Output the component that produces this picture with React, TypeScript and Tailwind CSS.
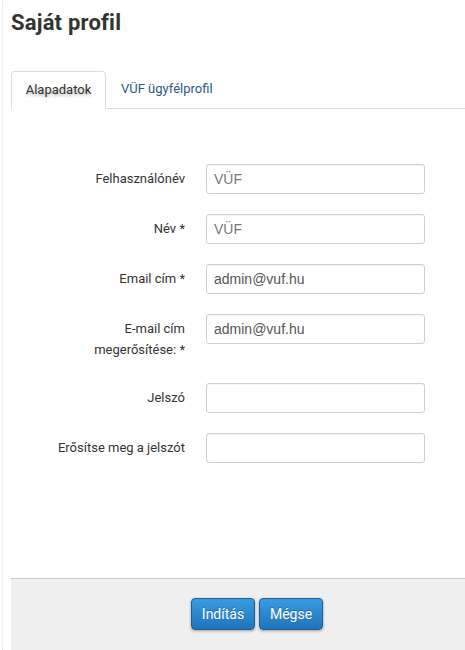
import React from "react";

const rows: { label: string[]; value: string; gray?: boolean }[] = [
  { label: ["Felhasználónév"], value: "VÜF", gray: true },
  { label: ["Név *"], value: "VÜF", gray: true },
  { label: ["Email cím *"], value: "admin@vuf.hu" },
  { label: ["E-mail cím", "megerősítése: *"], value: "admin@vuf.hu" },
  { label: ["Jelszó"], value: "" },
  { label: ["Erősítse meg a jelszót"], value: "" },
];

export default function App() {
  return (
    <div className="w-[465px] h-[650px] overflow-hidden bg-white" style={{ fontFamily: "Roboto, 'Liberation Sans', sans-serif" }}>
      <div className="ml-[2px] h-full border-l border-dotted border-[#e2e2e2] pl-[8px]">
        <h1 className="pt-[9px] text-[22px] font-bold leading-[28px] text-[#333] tracking-[0.2px]">Saját profil</h1>
        <div className="mt-[34px] flex h-[38px] items-end border-b border-[#dcdcdc]">
          <div className="mb-[-1px] flex h-[38px] w-[95px] items-center justify-center rounded-t-[4px] border border-[#dcdcdc] border-b-white bg-white text-[13px] text-[#333] [text-shadow:0_2px_3px_rgba(0,0,0,0.3)]">
            Alapadatok
          </div>
          <div className="flex h-[38px] items-center pl-[15px] text-[13px] text-[#2a5885]">VÜF ügyfélprofil</div>
        </div>
        <div className="mt-[55px] grid grid-cols-[174px_219px] gap-x-[21px] gap-y-[20px] items-start">
          {rows.map((r, i) => (
            <React.Fragment key={i}>
              <div className={`text-right text-[13px] leading-[21px] pt-[4px] text-[#333] ${i === 4 ? "mt-[3px]" : ""}`}>
                {r.label.map((l, j) => (
                  <div key={j}>{l}</div>
                ))}
              </div>
              <div
                className={`h-[30px] rounded-[3px] border border-[#cfcfcf] px-[7px] flex items-center text-[14px] shadow-[inset_0_1px_1px_rgba(0,0,0,0.04)] ${i === 4 ? "mt-[3px]" : ""} ${r.gray ? "text-[#777]" : "text-[#555]"}`}
                style={{ fontFamily: "'Liberation Sans', Arial, sans-serif" }}
              >
                {r.value}
              </div>
            </React.Fragment>
          ))}
        </div>
        <div className="mt-[115px] h-[80px] border-t border-[#cccccc] bg-[#efefef] pt-[19px] pl-[180px] flex gap-[4px]">
          <button className="h-[32px] w-[64px] rounded-[4px] border border-[#1b5e96] bg-gradient-to-b from-[#3a9be0] to-[#1f74ba] text-[14px] text-white shadow-[0_1px_3px_rgba(0,0,0,0.35)] [text-shadow:0_-1px_0_rgba(0,0,0,0.25)]">
            Indítás
          </button>
          <button className="h-[32px] w-[64px] rounded-[4px] border border-[#1b5e96] bg-gradient-to-b from-[#3a9be0] to-[#1f74ba] text-[14px] text-white shadow-[0_1px_3px_rgba(0,0,0,0.35)] [text-shadow:0_-1px_0_rgba(0,0,0,0.25)]">
            Mégse
          </button>
        </div>
      </div>
    </div>
  );
}
